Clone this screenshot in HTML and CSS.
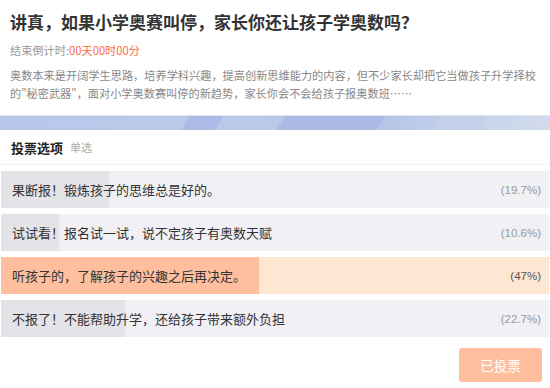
FILE: index.html
```html
<!DOCTYPE html>
<html lang="zh-CN">
<head>
  <meta charset="UTF-8">
  <meta name="viewport" content="width=device-width, initial-scale=1.0">
  <title>投票</title>
  <link rel="stylesheet" href="styles.css">
</head>
<body>
  <div class="intro">
    <h1 class="title">讲真，如果小学奥赛叫停，家长你还让孩子学奥数吗？</h1>
    <p class="countdown">结束倒计时:<span class="num">00天00时00分</span></p>
    <p class="desc">奥数本来是开阔学生思路，培养学科兴趣，提高创新思维能力的内容，但不少家长却把它当做孩子升学择校的"秘密武器"，面对小学奥数赛叫停的新趋势，家长你会不会给孩子报奥数班……</p>
  </div>
  <div class="band"></div>

  <div class="vote">
    <div class="vote-head"><b>投票选项</b><span class="type">单选</span></div>
    <ul class="options">
      <li class="option" style="--p:19.7%"><span>果断报！锻炼孩子的思维总是好的。</span><em>(19.7%)</em></li>
      <li class="option" style="--p:10.6%"><span>试试看！报名试一试，说不定孩子有奥数天赋</span><em>(10.6%)</em></li>
      <li class="option picked" style="--p:47%"><span>听孩子的，了解孩子的兴趣之后再决定。</span><em>(47%)</em></li>
      <li class="option" style="--p:22.7%"><span>不报了！不能帮助升学，还给孩子带来额外负担</span><em>(22.7%)</em></li>
    </ul>
    <div class="actions">
      <button class="btn" disabled>已投票</button>
    </div>
  </div>
</body>
</html>
```

FILE: styles.css
```css
:root{--fg:#333;--muted:#999;--accent:#ff6a3d;--row:#f0f0f5;--rowfill:#e3e3e8;--peach:#fde7d3;--orange:#ffbf9e;}
body{margin:0;background:#fff;color:var(--fg);font-family:"Noto Sans CJK SC","Liberation Sans",sans-serif;}
.intro{padding:10px 10px 0;}
.title{margin:0;font-size:17px;line-height:24px;font-weight:700;color:#333;}
.countdown{margin:8px 0 0;font-size:11.2px;line-height:16px;color:var(--muted);}
.countdown .num{color:var(--accent);}
.desc{margin:8px 0 0;font-size:11.2px;line-height:18px;color:#888;}
.band{height:15px;margin-top:13px;border-top:1px solid #dfe6f4;box-sizing:border-box;
  background:
    linear-gradient(120deg,transparent 0 34%,#acbbe5 34% 40%,transparent 40% 100%),
    linear-gradient(120deg,transparent 0 51%,#abb9e3 51% 69%,transparent 69% 100%),
    linear-gradient(120deg,transparent 0 79%,#c4d0ea 79% 87%,transparent 87% 100%),
    linear-gradient(90deg,#b8c8ea 0%,#bac9ea 45%,#b6c5e8 70%,#c9d4eb 88%,#d2dbec 100%);}
.vote-head{height:35px;display:flex;align-items:center;padding:0 11px;border-bottom:1px solid #f3f3f3;box-sizing:border-box;}
.vote-head b{font-size:13px;font-weight:700;color:#222;}
.type{margin-left:7px;font-size:11px;color:#aaa;}
.options{list-style:none;margin:0;padding:6px 1px 0;display:flex;flex-direction:column;gap:6px;}
.option{height:37px;display:flex;align-items:center;justify-content:space-between;padding:0 8px 0 11px;
  background:linear-gradient(90deg,var(--rowfill) 0 var(--p),var(--row) var(--p) 100%);font-size:13px;color:#333;}
.option em{font-style:normal;font-family:"Liberation Sans",Arial,sans-serif;font-size:11.5px;color:var(--muted);}
.option.picked{background:linear-gradient(90deg,var(--orange) 0 var(--p),var(--peach) var(--p) 100%);}
.option.picked em{color:#555;}
.actions{display:flex;justify-content:flex-end;padding:11px 8px 0;}
.btn{width:83px;height:34px;border:none;border-radius:3px;background:var(--orange);color:#fff;font-size:13.5px;font-family:inherit;cursor:default;}
```
